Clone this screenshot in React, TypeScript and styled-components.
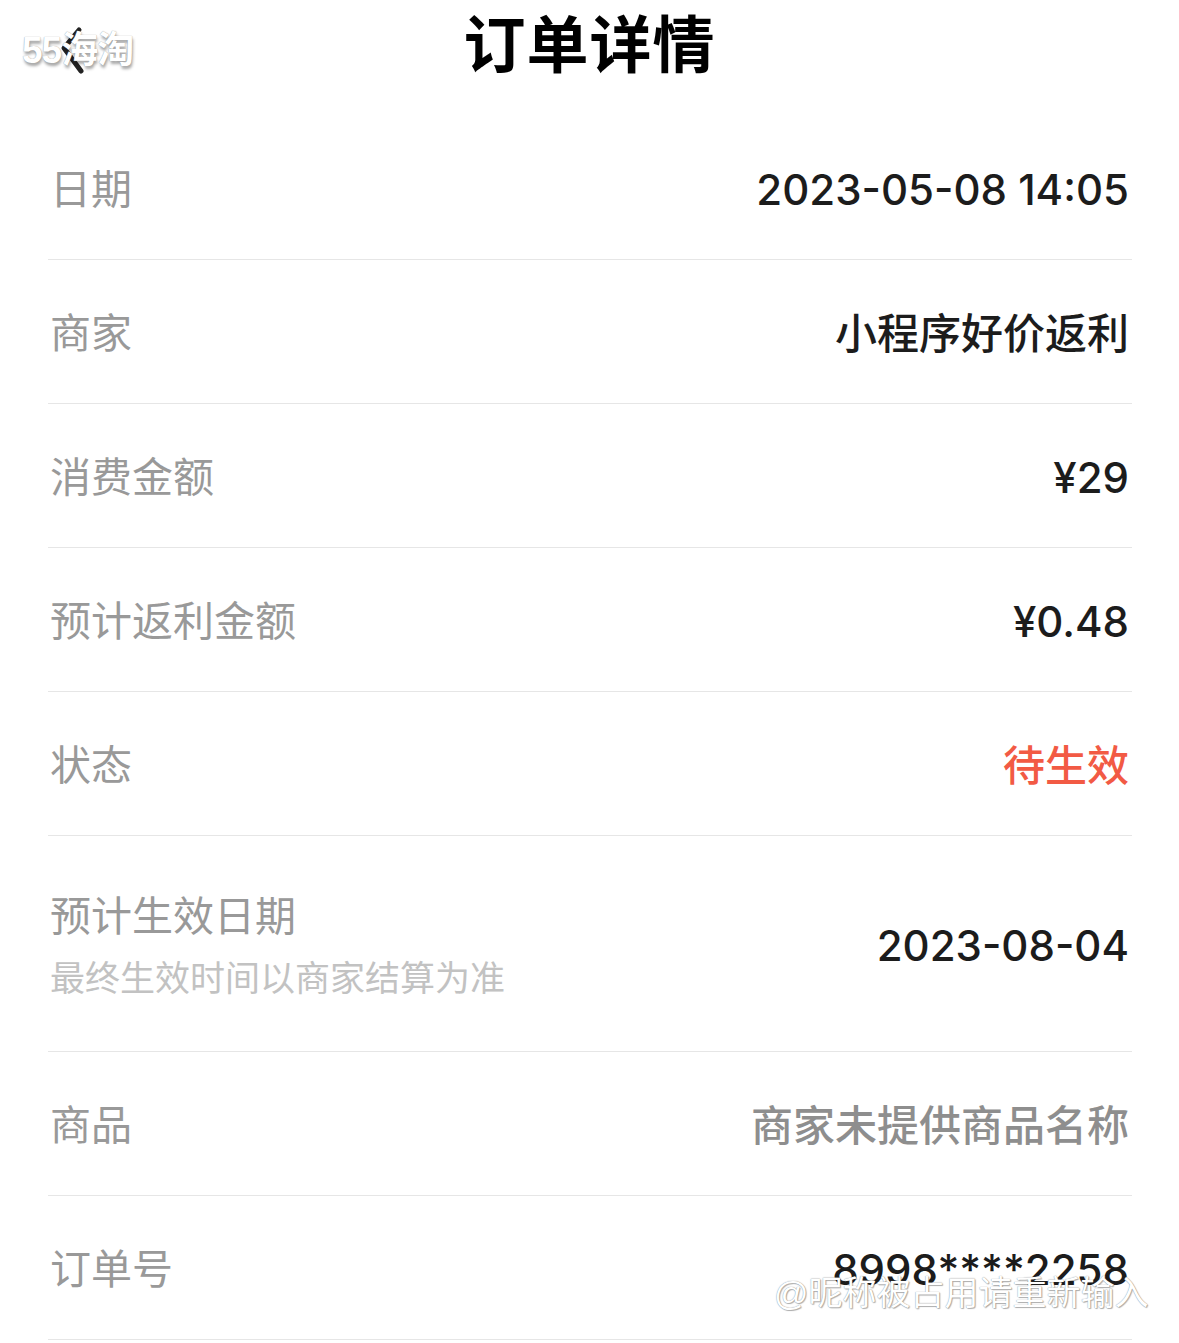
import React from "react";
import styled, { createGlobalStyle } from "styled-components";

const GlobalStyle = createGlobalStyle`
  html, body {
    margin: 0;
    padding: 0;
    background: #fff;
  }
  body {
    font-family: "Liberation Sans", "Noto Sans CJK SC", sans-serif;
  }
`;

interface OrderRow {
  label: string;
  value: string;
  hint?: string;
  tone?: "normal" | "red" | "muted";
}

const rows: OrderRow[] = [
  { label: "日期", value: "2023-05-08 14:05" },
  { label: "商家", value: "小程序好价返利" },
  { label: "消费金额", value: "¥29" },
  { label: "预计返利金额", value: "¥0.48" },
  { label: "状态", value: "待生效", tone: "red" },
  { label: "预计生效日期", value: "2023-08-04", hint: "最终生效时间以商家结算为准" },
  { label: "商品", value: "商家未提供商品名称", tone: "muted" },
  { label: "订单号", value: "8998****2258" },
];

const Page = styled.div`
  position: relative;
  width: 1179px;
  min-height: 1343px;
  overflow: hidden;
`;

const Header = styled.header`
  position: relative;
  height: 116px;
  display: flex;
  justify-content: center;
`;

const Title = styled.h1`
  margin: 12px 0 0;
  font-size: 62px;
  font-weight: 700;
  color: #000;
  line-height: 70px;
  letter-spacing: 1px;
`;

const BackButton = styled.button`
  position: absolute;
  left: 56px;
  top: 25px;
  width: 34px;
  height: 54px;
  padding: 0;
  border: none;
  background: none;
`;

const Watermark = styled.span<{ $size: number }>`
  position: absolute;
  font-size: ${(p) => p.$size}px;
  color: #fff;
  white-space: nowrap;
  pointer-events: none;
`;

const LogoMark = styled(Watermark)`
  left: 22px;
  top: 20px;
  font-weight: 700;
  letter-spacing: -1px;
  text-shadow: 0 0 1px #888, 1px 3px 3px rgba(0, 0, 0, 0.35);
`;

const UserMark = styled(Watermark)`
  left: 774px;
  top: 1266px;
  font-weight: 400;
  text-shadow: 0 0 1px #777, 1px 1px 1px rgba(0, 0, 0, 0.3);
`;

const List = styled.div`
  margin: 0 47px 0 48px;
`;

const Row = styled.div<{ $tall?: boolean }>`
  height: ${(p) => (p.$tall ? 215 : 143)}px;
  box-sizing: border-box;
  display: flex;
  align-items: center;
  justify-content: space-between;
  border-bottom: 1px solid #e6e6e6;
  padding: 5px 3px 0 2px;
  box-sizing: content-box;
  height: ${(p) => (p.$tall ? 210 : 138)}px;
`;

const LabelBlock = styled.div`
  display: flex;
  flex-direction: column;
`;

const Label = styled.span`
  font-size: 41px;
  line-height: 58px;
  color: #999;
`;

const Hint = styled.span`
  margin-top: 8px;
  font-size: 35px;
  line-height: 50px;
  color: #c2c2c2;
`;

const toneColor = {
  normal: "#1c1c1c",
  red: "#f25a44",
  muted: "#8e8e8e",
};

const Value = styled.span<{ $tone: keyof typeof toneColor }>`
  font-family: Inter, "Noto Sans CJK SC", sans-serif;
  font-size: 42px;
  line-height: 58px;
  font-weight: 500;
  color: ${(p) => toneColor[p.$tone]};
`;

const Chevron = () => (
  <svg width="34" height="54" viewBox="0 0 34 54">
    <path d="M23 5 L8 23 L25 46" fill="none" stroke="#222" strokeWidth="5" strokeLinecap="round" strokeLinejoin="round" />
  </svg>
);

export default function App() {
  return (
    <Page>
      <GlobalStyle />
      <Header>
        <BackButton aria-label="返回">
          <Chevron />
        </BackButton>
        <Title>订单详情</Title>
      </Header>
      <List>
        {rows.map((row) => (
          <Row key={row.label} $tall={!!row.hint}>
            <LabelBlock>
              <Label>{row.label}</Label>
              {row.hint && <Hint>{row.hint}</Hint>}
            </LabelBlock>
            <Value $tone={row.tone ?? "normal"}>{row.value}</Value>
          </Row>
        ))}
      </List>
      <LogoMark $size={37}>55海淘</LogoMark>
      <UserMark $size={34}>@昵称被占用请重新输入</UserMark>
    </Page>
  );
}
